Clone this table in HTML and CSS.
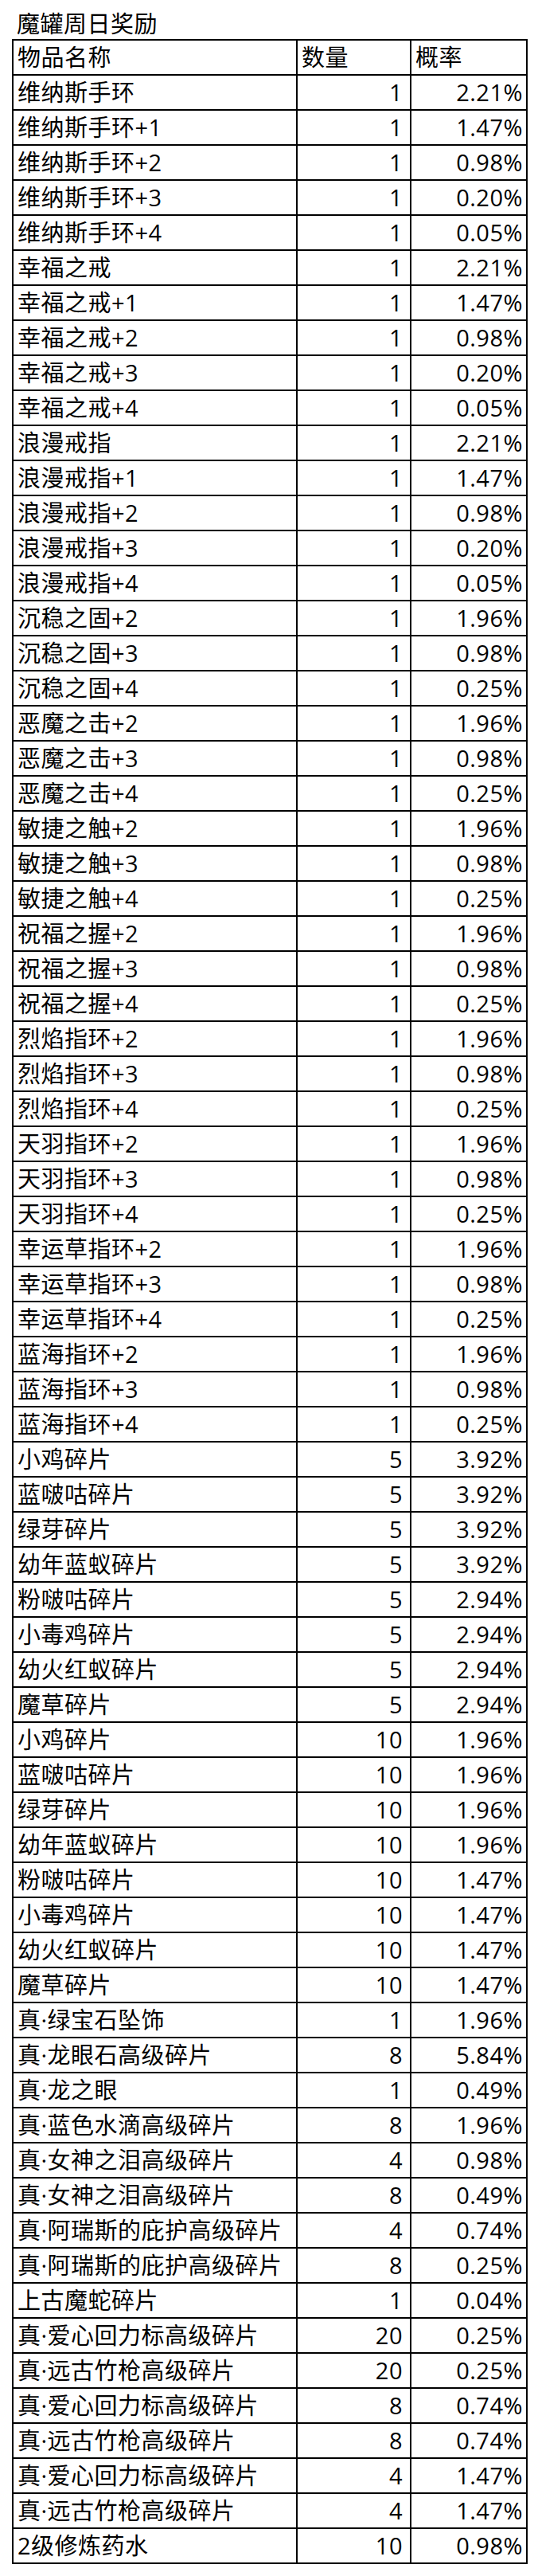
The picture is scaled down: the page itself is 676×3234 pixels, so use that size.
FILE: index.html
```html
<!DOCTYPE html>
<html lang="zh-CN">
<head>
<meta charset="utf-8">
<title>魔罐周日奖励</title>
<link rel="stylesheet" href="styles.css">
</head>
<body>
<div class="sheet">
<div class="title">魔罐周日奖励</div>
<table class="rewards">
<colgroup><col class="c-name"><col class="c-qty"><col class="c-rate"></colgroup>
<thead>
<tr><th>物品名称</th><th>数量</th><th>概率</th></tr>
</thead>
<tbody>
<tr><td>维纳斯手环</td><td class="num">1</td><td class="pct">2.21%</td></tr>
<tr><td>维纳斯手环+1</td><td class="num">1</td><td class="pct">1.47%</td></tr>
<tr><td>维纳斯手环+2</td><td class="num">1</td><td class="pct">0.98%</td></tr>
<tr><td>维纳斯手环+3</td><td class="num">1</td><td class="pct">0.20%</td></tr>
<tr><td>维纳斯手环+4</td><td class="num">1</td><td class="pct">0.05%</td></tr>
<tr><td>幸福之戒</td><td class="num">1</td><td class="pct">2.21%</td></tr>
<tr><td>幸福之戒+1</td><td class="num">1</td><td class="pct">1.47%</td></tr>
<tr><td>幸福之戒+2</td><td class="num">1</td><td class="pct">0.98%</td></tr>
<tr><td>幸福之戒+3</td><td class="num">1</td><td class="pct">0.20%</td></tr>
<tr><td>幸福之戒+4</td><td class="num">1</td><td class="pct">0.05%</td></tr>
<tr><td>浪漫戒指</td><td class="num">1</td><td class="pct">2.21%</td></tr>
<tr><td>浪漫戒指+1</td><td class="num">1</td><td class="pct">1.47%</td></tr>
<tr><td>浪漫戒指+2</td><td class="num">1</td><td class="pct">0.98%</td></tr>
<tr><td>浪漫戒指+3</td><td class="num">1</td><td class="pct">0.20%</td></tr>
<tr><td>浪漫戒指+4</td><td class="num">1</td><td class="pct">0.05%</td></tr>
<tr><td>沉稳之固+2</td><td class="num">1</td><td class="pct">1.96%</td></tr>
<tr><td>沉稳之固+3</td><td class="num">1</td><td class="pct">0.98%</td></tr>
<tr><td>沉稳之固+4</td><td class="num">1</td><td class="pct">0.25%</td></tr>
<tr><td>恶魔之击+2</td><td class="num">1</td><td class="pct">1.96%</td></tr>
<tr><td>恶魔之击+3</td><td class="num">1</td><td class="pct">0.98%</td></tr>
<tr><td>恶魔之击+4</td><td class="num">1</td><td class="pct">0.25%</td></tr>
<tr><td>敏捷之触+2</td><td class="num">1</td><td class="pct">1.96%</td></tr>
<tr><td>敏捷之触+3</td><td class="num">1</td><td class="pct">0.98%</td></tr>
<tr><td>敏捷之触+4</td><td class="num">1</td><td class="pct">0.25%</td></tr>
<tr><td>祝福之握+2</td><td class="num">1</td><td class="pct">1.96%</td></tr>
<tr><td>祝福之握+3</td><td class="num">1</td><td class="pct">0.98%</td></tr>
<tr><td>祝福之握+4</td><td class="num">1</td><td class="pct">0.25%</td></tr>
<tr><td>烈焰指环+2</td><td class="num">1</td><td class="pct">1.96%</td></tr>
<tr><td>烈焰指环+3</td><td class="num">1</td><td class="pct">0.98%</td></tr>
<tr><td>烈焰指环+4</td><td class="num">1</td><td class="pct">0.25%</td></tr>
<tr><td>天羽指环+2</td><td class="num">1</td><td class="pct">1.96%</td></tr>
<tr><td>天羽指环+3</td><td class="num">1</td><td class="pct">0.98%</td></tr>
<tr><td>天羽指环+4</td><td class="num">1</td><td class="pct">0.25%</td></tr>
<tr><td>幸运草指环+2</td><td class="num">1</td><td class="pct">1.96%</td></tr>
<tr><td>幸运草指环+3</td><td class="num">1</td><td class="pct">0.98%</td></tr>
<tr><td>幸运草指环+4</td><td class="num">1</td><td class="pct">0.25%</td></tr>
<tr><td>蓝海指环+2</td><td class="num">1</td><td class="pct">1.96%</td></tr>
<tr><td>蓝海指环+3</td><td class="num">1</td><td class="pct">0.98%</td></tr>
<tr><td>蓝海指环+4</td><td class="num">1</td><td class="pct">0.25%</td></tr>
<tr><td>小鸡碎片</td><td class="num">5</td><td class="pct">3.92%</td></tr>
<tr><td>蓝啵咕碎片</td><td class="num">5</td><td class="pct">3.92%</td></tr>
<tr><td>绿芽碎片</td><td class="num">5</td><td class="pct">3.92%</td></tr>
<tr><td>幼年蓝蚁碎片</td><td class="num">5</td><td class="pct">3.92%</td></tr>
<tr><td>粉啵咕碎片</td><td class="num">5</td><td class="pct">2.94%</td></tr>
<tr><td>小毒鸡碎片</td><td class="num">5</td><td class="pct">2.94%</td></tr>
<tr><td>幼火红蚁碎片</td><td class="num">5</td><td class="pct">2.94%</td></tr>
<tr><td>魔草碎片</td><td class="num">5</td><td class="pct">2.94%</td></tr>
<tr><td>小鸡碎片</td><td class="num">10</td><td class="pct">1.96%</td></tr>
<tr><td>蓝啵咕碎片</td><td class="num">10</td><td class="pct">1.96%</td></tr>
<tr><td>绿芽碎片</td><td class="num">10</td><td class="pct">1.96%</td></tr>
<tr><td>幼年蓝蚁碎片</td><td class="num">10</td><td class="pct">1.96%</td></tr>
<tr><td>粉啵咕碎片</td><td class="num">10</td><td class="pct">1.47%</td></tr>
<tr><td>小毒鸡碎片</td><td class="num">10</td><td class="pct">1.47%</td></tr>
<tr><td>幼火红蚁碎片</td><td class="num">10</td><td class="pct">1.47%</td></tr>
<tr><td>魔草碎片</td><td class="num">10</td><td class="pct">1.47%</td></tr>
<tr><td>真·绿宝石坠饰</td><td class="num">1</td><td class="pct">1.96%</td></tr>
<tr><td>真·龙眼石高级碎片</td><td class="num">8</td><td class="pct">5.84%</td></tr>
<tr><td>真·龙之眼</td><td class="num">1</td><td class="pct">0.49%</td></tr>
<tr><td>真·蓝色水滴高级碎片</td><td class="num">8</td><td class="pct">1.96%</td></tr>
<tr><td>真·女神之泪高级碎片</td><td class="num">4</td><td class="pct">0.98%</td></tr>
<tr><td>真·女神之泪高级碎片</td><td class="num">8</td><td class="pct">0.49%</td></tr>
<tr><td>真·阿瑞斯的庇护高级碎片</td><td class="num">4</td><td class="pct">0.74%</td></tr>
<tr><td>真·阿瑞斯的庇护高级碎片</td><td class="num">8</td><td class="pct">0.25%</td></tr>
<tr><td>上古魔蛇碎片</td><td class="num">1</td><td class="pct">0.04%</td></tr>
<tr><td>真·爱心回力标高级碎片</td><td class="num">20</td><td class="pct">0.25%</td></tr>
<tr><td>真·远古竹枪高级碎片</td><td class="num">20</td><td class="pct">0.25%</td></tr>
<tr><td>真·爱心回力标高级碎片</td><td class="num">8</td><td class="pct">0.74%</td></tr>
<tr><td>真·远古竹枪高级碎片</td><td class="num">8</td><td class="pct">0.74%</td></tr>
<tr><td>真·爱心回力标高级碎片</td><td class="num">4</td><td class="pct">1.47%</td></tr>
<tr><td>真·远古竹枪高级碎片</td><td class="num">4</td><td class="pct">1.47%</td></tr>
<tr><td>2级修炼药水</td><td class="num">10</td><td class="pct">0.98%</td></tr>
</tbody>
</table>
</div>
</body>
</html>
```
FILE: styles.css
```css
html, body {
  margin: 0;
  padding: 0;
  background: #ffffff;
}

.sheet {
  padding: 0 0 0 15px;
  font-family: "Open Sans", "Noto Sans CJK SC", sans-serif;
  font-size: 29px;
  letter-spacing: 0.5px;
  color: #000000;
}

.title {
  height: 49px;
  line-height: 60px;
  padding-left: 6px;
  box-sizing: border-box;
}

.rewards {
  border-collapse: collapse;
  width: 646px;
  table-layout: fixed;
}

.c-name { width: 357px; }
.c-qty { width: 143px; }
.c-rate { width: 146px; }

.rewards th,
.rewards td {
  border: 2px solid #000000;
  height: 44px;
  padding: 0 5px;
  font-weight: normal;
  text-align: left;
  white-space: nowrap;
  vertical-align: middle;
  line-height: 30px;
  box-sizing: border-box;
  overflow: hidden;
}

.rewards td.num {
  text-align: right;
  padding-right: 9px;
}

.rewards td.pct {
  text-align: right;
  padding-right: 4px;
}
```
